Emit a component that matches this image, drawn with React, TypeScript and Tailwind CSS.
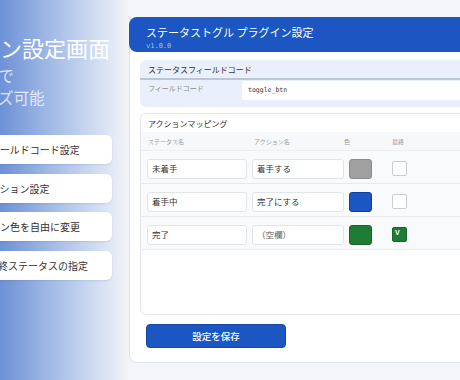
import React from "react";

const features = [
  { text: "フィールドコード設定", pad: "pl-[59px]" },
  { text: "アクション設定", pad: "pl-[59px]" },
  { text: "ボタン色を自由に変更", pad: "pl-[59px]" },
  { text: "最終ステータスの指定", pad: "pl-[67px]" },
];

const rows = [
  { status: "未着手", action: "着手する", color: "bg-[#a0a0a0] border-[#8c8c8c]", final: false, empty: false },
  { status: "着手中", action: "完了にする", color: "bg-[#1b56c3] border-[#113f9c]", final: false, empty: false },
  { status: "完了", action: "（空欄）", color: "bg-[#1f7c35] border-[#17652a]", final: true, empty: true },
];

export default function App() {
  return (
    <div className="w-[460px] h-[380px] overflow-hidden flex bg-[#f3f5f9] font-['Noto_Sans_CJK_JP','Noto_Sans',sans-serif]">
      <aside className="w-[129px] shrink-0 h-full overflow-hidden bg-linear-to-r from-[#6d91d6] via-[#b1c5ea] to-[#f3f5f9] pt-[33px]">
        <div className="-ml-[79px] w-[208px]">
          <h1 className="-ml-[9px] text-[22px] leading-[28px] text-white whitespace-nowrap font-normal">
            プラグイン設定画面
          </h1>
          <p className="mt-[3px] text-[15.5px] leading-[22px] text-white/75 whitespace-nowrap">
            ノーコードで
            <br />
            カスタマイズ可能
          </p>
          <ul className="mt-[27px] flex flex-col gap-[9.5px] w-[191px]">
            {features.map((f) => (
              <li
                key={f.text}
                className={`h-[29px] rounded-[6px] bg-white shadow-[0_1px_2px_rgba(40,60,110,0.12)] flex items-center text-[10px] text-[#333] whitespace-nowrap ${f.pad}`}
              >
                {f.text}
              </li>
            ))}
          </ul>
        </div>
      </aside>

      <main className="flex-1 pt-[17px]">
        <div className="w-[360px] h-[346px] bg-white border border-[#dde2ea] rounded-[8px]">
          <header className="-m-px h-[35px] rounded-[8px] bg-[#1b56c3] pl-[17px] pt-[8px]">
            <div className="text-[11px] leading-[14px] text-white whitespace-nowrap">
              ステータストグル プラグイン設定
            </div>
            <div className="mt-[2.5px] text-[7px] leading-[9px] text-[#a9bee8] font-['DejaVu_Sans_Mono',monospace]">
              v1.0.0
            </div>
          </header>

          <div className="pl-[10px] pt-[9px]">
            <section className="h-[47px] rounded-[6px] bg-[#e9f0fb] overflow-hidden">
              <div className="h-[18px] pl-[8px] pt-[1px] text-[8px] leading-[18px] text-[#333] whitespace-nowrap">
                ステータスフィールドコード
              </div>
              <div className="h-[2px] bg-[#bac6d5]" />
              <div className="flex pl-[8px]">
                <div className="w-[94px] pt-[3px] text-[7px] leading-[10px] text-[#8a8a8a] whitespace-nowrap">
                  フィールドコード
                </div>
                <div className="mt-[1px] h-[19px] flex-1 bg-white rounded-l-[3px] pl-[6px] flex items-center text-[6.5px] text-[#333] font-['DejaVu_Sans_Mono',monospace]">
                  toggle_btn
                </div>
              </div>
            </section>

            <section className="mt-[6px] h-[202px] border border-[#e2e6ec] rounded-[6px] bg-white overflow-hidden">
              <div className="h-[18px] pl-[7px] text-[8px] leading-[20px] text-[#333] whitespace-nowrap">
                アクションマッピング
              </div>
              <div className="h-[19px] bg-[#f7f8fa] border-b border-[#eceef2] flex items-center pl-[7px] text-[6px] text-[#9a9a9a] whitespace-nowrap">
                <span className="w-[106px]">ステータス名</span>
                <span className="w-[90px]">アクション名</span>
                <span className="w-[48px]">色</span>
                <span>最終</span>
              </div>
              {rows.map((r) => (
                <div
                  key={r.status}
                  className="h-[33px] bg-[#f9fafb] border-b border-[#e6e9ee] flex items-center pt-[3px] pl-[6px]"
                >
                  <div className="w-[100px] h-[20px] bg-white border border-[#e1e4e9] rounded-[3px] pl-[4px] flex items-center text-[8.5px] text-[#333]">
                    {r.status}
                  </div>
                  <div className="ml-[5px] w-[92px] h-[20px] bg-white border border-[#e1e4e9] rounded-[3px] pl-[4px] flex items-center text-[8.5px] whitespace-nowrap">
                    <span className={r.empty ? "text-[#666]" : "text-[#333]"}>{r.action}</span>
                  </div>
                  <div className={`ml-[5px] w-[23px] h-[20px] rounded-[3px] border ${r.color}`} />
                  {r.final ? (
                    <div className="ml-[20px] w-[15px] h-[15px] rounded-[2px] border border-[#17652a] bg-[#1f7c35] pl-[2px] pt-[1px] text-[7px] leading-[8px] font-bold text-white font-['Liberation_Sans',sans-serif]">
                      V
                    </div>
                  ) : (
                    <div className="ml-[20px] w-[15px] h-[15px] rounded-[2px] border border-[#c9cdd3] bg-white" />
                  )}
                </div>
              ))}
            </section>

            <button className="mt-[9px] ml-[6px] w-[140px] h-[24px] bg-[#1b56c3] border border-[#1447a6] rounded-[4px] text-white text-[9.5px] font-medium flex items-center justify-center">
              設定を保存
            </button>
          </div>
        </div>
      </main>
    </div>
  );
}
